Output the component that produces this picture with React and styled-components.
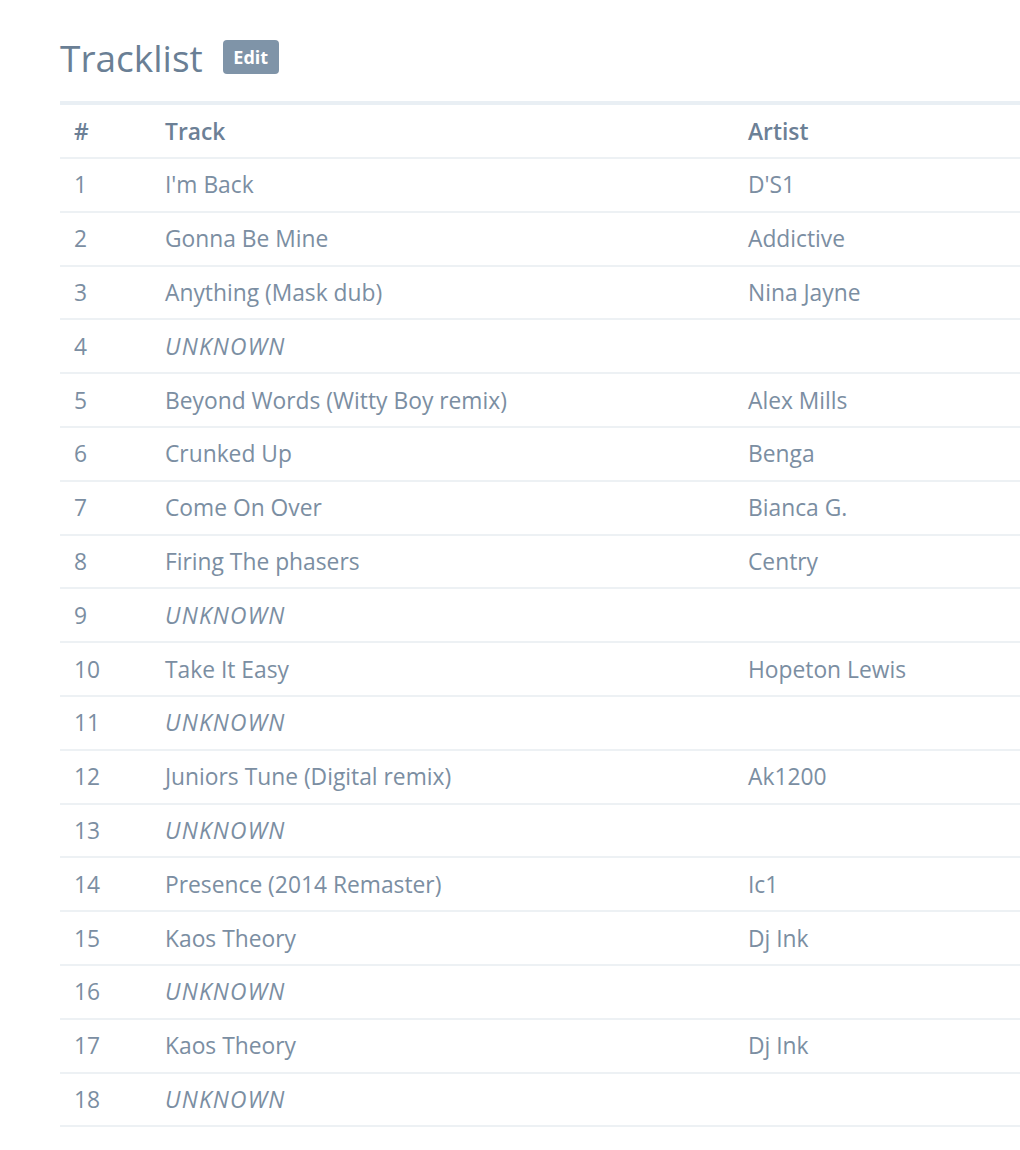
import React from "react";
import styled, { createGlobalStyle } from "styled-components";

const tracks = [
  { title: "I'm Back", artist: "D'S1" },
  { title: "Gonna Be Mine", artist: "Addictive" },
  { title: "Anything (Mask dub)", artist: "Nina Jayne" },
  { title: null },
  { title: "Beyond Words (Witty Boy remix)", artist: "Alex Mills" },
  { title: "Crunked Up", artist: "Benga" },
  { title: "Come On Over", artist: "Bianca G." },
  { title: "Firing The phasers", artist: "Centry" },
  { title: null },
  { title: "Take It Easy", artist: "Hopeton Lewis" },
  { title: null },
  { title: "Juniors Tune (Digital remix)", artist: "Ak1200" },
  { title: null },
  { title: "Presence (2014 Remaster)", artist: "Ic1" },
  { title: "Kaos Theory", artist: "Dj Ink" },
  { title: null },
  { title: "Kaos Theory", artist: "Dj Ink" },
  { title: null },
];

export default function App() {
  return (
    <>
      <GlobalStyle />
      <Page>
        <Header>
          <Title>Tracklist</Title>
          <EditButton>Edit</EditButton>
        </Header>
        <Table>
          <colgroup>
            <col style={{ width: 91 }} />
            <col style={{ width: 583 }} />
            <col />
          </colgroup>
          <thead>
            <tr>
              <HeadCell>#</HeadCell>
              <HeadCell>Track</HeadCell>
              <HeadCell>Artist</HeadCell>
            </tr>
          </thead>
          <tbody>
            {tracks.map((t, i) => (
              <tr key={i}>
                <Cell>{i + 1}</Cell>
                <Cell>
                  {t.title ? t.title : <Unknown>UNKNOWN</Unknown>}
                </Cell>
                <Cell>{t.artist}</Cell>
              </tr>
            ))}
          </tbody>
        </Table>
      </Page>
    </>
  );
}

const GlobalStyle = createGlobalStyle`
  body {
    margin: 0;
    background: #fff;
    font-family: "Open Sans", "Noto Sans", sans-serif;
    overflow: hidden;
  }
`;

const Page = styled.div`
  padding: 30px 0 0 60px;
`;

const Header = styled.div`
  display: flex;
  align-items: center;
  gap: 20px;
  height: 54px;
  margin-bottom: 17px;
`;

const Title = styled.h1`
  margin: 0;
  font-size: 37px;
  font-weight: 400;
  color: #6a7f95;
  line-height: 1;
`;

const EditButton = styled.span`
  display: inline-flex;
  align-items: center;
  justify-content: center;
  width: 56px;
  height: 34px;
  border-radius: 4px;
  background: #7f94a8;
  color: #fff;
  font-size: 18px;
  font-weight: 700;
`;

const Table = styled.table`
  width: 100%;
  table-layout: fixed;
  border-collapse: collapse;
  border-top: 4px solid #e9eff4;
  font-size: 22.8px;
`;

const HeadCell = styled.th`
  height: 52px;
  padding: 0 14px;
  text-align: left;
  font-weight: 600;
  color: #6c8096;
  border-bottom: 2px solid #edf1f4;
`;

const Cell = styled.td`
  height: 51.8px;
  padding: 0 14px;
  color: #7b8ea2;
  border-bottom: 2px solid #edf1f4;
  white-space: nowrap;
`;

const Unknown = styled.em`
  font-style: italic;
  letter-spacing: 1.2px;
`;
